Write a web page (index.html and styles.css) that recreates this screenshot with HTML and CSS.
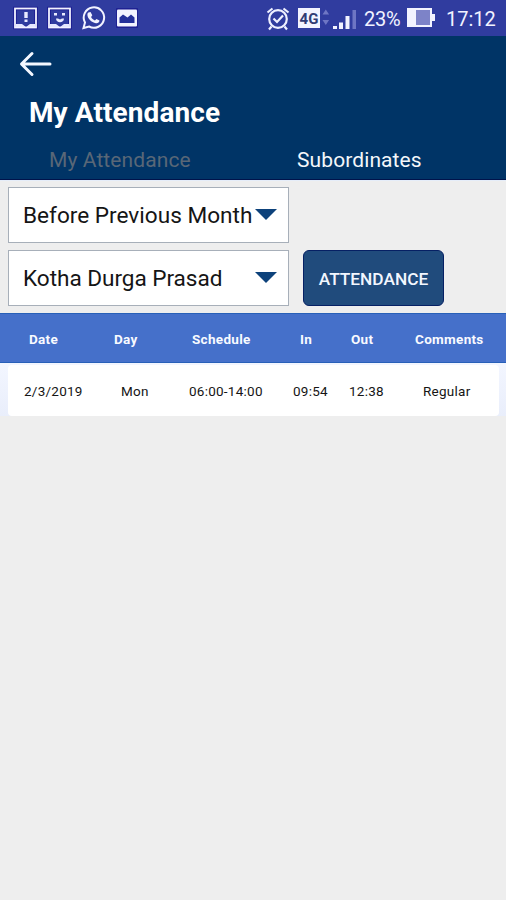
FILE: index.html
```html
<!DOCTYPE html>
<html lang="en">
<head>
<meta charset="utf-8">
<title>My Attendance</title>
<link rel="stylesheet" href="styles.css">
</head>
<body>
<div class="status">
  <svg class="notices" width="144" height="36" viewBox="0 0 144 36" fill="none">
    <g stroke="#18188f" stroke-width="3.500"><rect x="15" y="8.500" width="21" height="19"/><rect x="49" y="8.500" width="21" height="19"/><rect x="118" y="10" width="18" height="16"/></g>
    <g stroke="#f2f3ff" stroke-width="1.800"><rect x="15" y="8.500" width="21" height="19"/><rect x="49" y="8.500" width="21" height="19"/></g>
    <path d="M16 24h6l4 3 4-3h5v3H16zM50 24h6l4 3 4-3h5v3H50z" fill="#e5e7ff"/>
    <path d="M24.300 12h3.400v6h-3.400zM24.500 19.500h3v2.500h-3zM54 13h3v2.500h-3zM62 13h3v2.500h-3zM56 18.500h2l2 1 2-1h2c0 5-8 5-8 0z" fill="#e9ebff"/>
    <path d="M83.500 28l1.500-5.500A10.200 10.200 0 1 1 89 26.500z" stroke="#f2f3ff" stroke-width="2"/>
    <path d="M88.500 12.500l2-.5 1.800 3.300-1.200 1.700c.8 1.700 2 2.800 3.800 3.400l1.600-1.500 3 1.600c-.2 2-1.800 3-3.600 2.700-4.500-.8-8.500-5-8.500-8.500 0-1 .4-1.800 1.100-2.200z" fill="#f2f3ff"/>
    <rect x="117" y="9.500" width="20" height="17" rx="1" fill="#f2f3ff"/>
    <path d="M119.500 23v-5.500l3.500-3 4.500 3 3.500-3 3.500 3V23z" fill="#24309a"/>
  </svg>
  <svg class="signals" width="92" height="36" viewBox="266 0 92 36" fill="none">
    <g stroke="#eef0ff" stroke-width="2.200"><circle cx="278" cy="19" r="8.800"/><path d="M267.500 12.500l5-4M288.500 12.500l-5-4M271.500 26.500l-2.500 3M284.500 26.500l2.500 3M273.500 18.500l3.500 3.500 6-6.500"/></g>
    <rect x="298" y="8" width="22" height="20" fill="#f2f3ff"/>
    <path d="M322.500 14.500l3.300-5 3.300 5zM322.500 20h6.600l-3.300 5z" fill="#6e76c4"/>
    <path d="M333 26h4v3h-4zM339 22.500h4V29h-4zM345.500 16h4v13h-4z" fill="#f2f3ff"/>
    <path d="M352.500 10h3.500v19h-3.500z" fill="#6e76c4"/>
    <text class="network" x="299.500" y="23.500" textLength="19">4G</text>
  </svg>
  <span class="percent">23%</span>
  <svg class="battery" width="28" height="20" viewBox="0 0 28 20"><rect x="1" y="1" width="23" height="17" fill="#7d83c8" stroke="#f2f3ff" stroke-width="2"/><path d="M1 1h8v17H1zM25 6h3v7h-3z" fill="#f2f3ff"/></svg>
  <span class="time">17:12</span>
</div>
<header class="header">
  <svg class="back" width="34" height="26" viewBox="0 0 34 26" fill="none" stroke="#f3f7ff" stroke-width="3" stroke-linecap="round" stroke-linejoin="round"><path d="M31 13H3M13 2.500L2.500 13 13 23.500"/></svg>
  <h1 class="title">My Attendance</h1>
  <nav class="tabs"><span class="tab tab-muted">My Attendance</span><span class="tab">Subordinates</span></nav>
</header>
<main>
  <div class="filters">
    <div class="select"><span class="month">Before Previous Month</span><i class="caret"></i></div>
    <div class="filter-row">
      <div class="select"><span class="person">Kotha Durga Prasad</span><i class="caret"></i></div>
      <button class="button">ATTENDANCE</button>
    </div>
  </div>
  <div class="columns table-head"><span>Date</span><span>Day</span><span>Schedule</span><span>In</span><span>Out</span><span>Comments</span></div>
  <div class="table-body">
    <div class="columns row"><span>2/3/2019</span><span>Mon</span><span>06:00-14:00</span><span>09:54</span><span>12:38</span><span>Regular</span></div>
  </div>
</main>
</body>
</html>
```
FILE: styles.css
```css
* { box-sizing: border-box; }
body { margin: 0; width: 506px; height: 900px; overflow: hidden; background: #eee; font-family: Roboto, "Liberation Sans", sans-serif; color: #151515; }
svg { display: block; flex: none; }
span, h1, button { white-space: nowrap; }
.status { height: 36px; display: flex; align-items: center; background: #303c9f; color: #f2f3ff; font-size: 20px; }
.signals { margin-left: 122px; }
.network { font: bold 15px Roboto, sans-serif; fill: #303c75; }
.percent { width: 37px; margin-left: 6px; padding-top: 2px; letter-spacing: -.3px; }
.battery { margin-left: 6px; }
.time { margin-left: 11px; padding-top: 2px; }
.header { height: 144px; padding: 15px 0 0; background: #003466; border-bottom: 1px solid #00134b; color: #fff; }
.back { margin-left: 19px; }
.title { margin: 20px 0 0 29px; font-size: 28px; line-height: 32px; font-weight: 700; letter-spacing: .08px; }
.tabs { display: flex; margin-top: 19px; padding-left: 49px; font-size: 21px; line-height: 24px; letter-spacing: .1px; color: #f4f7fa; }
.tab-muted { width: 248px; color: #596777; }
.filters { height: 133px; padding: 6px 8px; border-top: 1px solid #e5edf9; display: flex; flex-direction: column; gap: 7px; }
.filter-row { display: flex; gap: 14px; }
.select { width: 281px; height: 56px; padding: 1px 11px 0 14px; display: flex; align-items: center; justify-content: space-between; background: #fff; border: 1px solid #a7afb9; font-size: 22.6px; }
.caret { flex: none; width: 0; height: 0; margin-top: -2px; border: 11px solid transparent; border-top: 11px solid #0d427b; border-bottom: 0; }
.person { letter-spacing: -.05px; }
.button { width: 141px; height: 56px; padding: 1px 0 0; border: 1px solid #062064; border-radius: 6px; background: #204b7c; color: #f2f7ff; font: 500 17.3px Roboto, sans-serif; }
.columns { display: grid; align-items: center; }
.table-head { height: 50px; padding: 1px 0 0 29px; grid-template-columns: 85px 78px 108px 51px 64px 1fr; background: #4570ca; border-top: 1px solid #2860b8; border-bottom: 1px solid #2860b8; color: #f8faff; font-size: 13.5px; font-weight: 700; letter-spacing: .3px; }
.table-body { padding: 2px 7px 0 8px; background: linear-gradient(#f3f6ff, #e9eefb) no-repeat; }
.row { height: 51px; padding: 1px 0 0 16px; grid-template-columns: 97px 68px 104px 56px 74px 1fr; background: #fff; border-radius: 4px; font-size: 13.5px; letter-spacing: .25px; }
```
